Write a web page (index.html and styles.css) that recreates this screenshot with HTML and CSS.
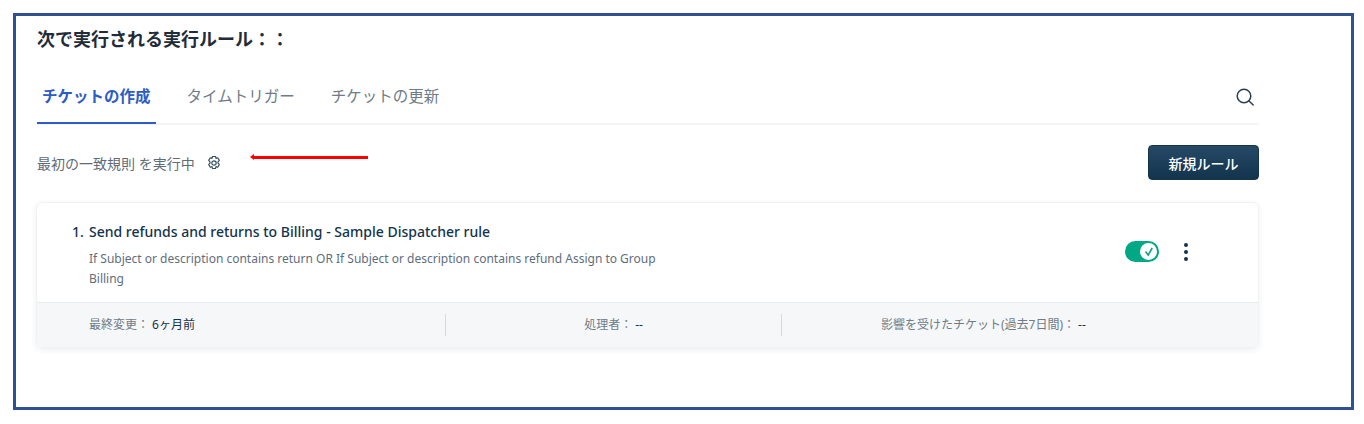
FILE: index.html
```html
<!DOCTYPE html>
<html lang="ja">
  <head>
    <meta charset="utf-8"/>
    <title>実行ルール</title>
    <link rel="stylesheet" href="styles.css">
  </head>
  <body>
    <div class="frame">
      <h1 class="title">次で実行される実行ルール：：</h1>
      <div class="tabs">
        <div class="tab-list">
          <a class="tab active">チケットの作成</a>
          <a class="tab">タイムトリガー</a>
          <a class="tab">チケットの更新</a>
        </div>
        <svg class="search" width="20" height="20" viewBox="0 0 20 20" fill="none" stroke="#2b3f54" stroke-width="1.5" stroke-linecap="round">
          <circle cx="9" cy="9" r="6.8"/>
          <path d="M14 14l4.2 4"/>
        </svg>
      </div>
      <div class="toolbar">
        <div class="mode">
          <span>最初の一致規則 を実行中</span>
          <svg class="gear" width="16" height="16" viewBox="0 0 16 16" fill="none" stroke="#3a4f63" stroke-width="1.2" stroke-linejoin="round">
            <path d="M6.5 1.5h3l.5 1.9 1.7-.6 1.6 2.6-1.3 1.5 0 1.2 1.3 1.5-1.6 2.6-1.7-.6-.5 1.9h-3l-.5-1.9-1.7.6-1.6-2.6 1.3-1.5 0-1.2-1.3-1.5 1.6-2.6 1.7.6z"/>
            <circle cx="8" cy="8" r="2.2"/>
          </svg>
        </div>
        <button class="new-rule">新規ルール</button>
      </div>
      <div class="card">
        <div class="card-body">
          <span class="num">1.</span>
          <div class="rule">
            <div class="rule-name">Send refunds and returns to Billing - Sample Dispatcher rule</div>
            <p class="rule-desc">If Subject or description contains return OR If Subject or description contains refund Assign to Group Billing</p>
          </div>
          <div class="toggle">
            <span class="knob">
              <svg width="12" height="12" viewBox="0 0 12 12" fill="none" stroke="#12a386" stroke-width="1.6">
                <path d="M2.5 5.5l2.7 3.5 4-7"/>
              </svg>
            </span>
          </div>
          <div class="more"><i></i><i></i><i></i></div>
        </div>
        <div class="card-foot">
          <div class="cell first"><span class="label">最終変更：</span><span class="value">6ヶ月前</span></div>
          <div class="cell second"><span class="label">処理者：</span><span class="value">--</span></div>
          <div class="cell third"><span class="label">影響を受けたチケット(過去7日間)：</span><span class="value">--</span></div>
        </div>
      </div>
      <div class="arrow"></div>
    </div>
  </body>
</html>
```

FILE: styles.css
```css
* {
  box-sizing: border-box;
}
body {
  margin: 0;
  background: #fff;
  font-family: "Noto Sans", "Noto Sans CJK JP", sans-serif;
  color: #12344d;
}
.frame {
  position: relative;
  width: 1341px;
  height: 397px;
  margin: 13px 0 0 13px;
  border: 3px solid #2f5190;
  padding: 0 92px 0 21px;
}
.title {
  margin: 0;
  padding-top: 10px;
  height: 46px;
  font-size: 18px;
  line-height: 26px;
  font-weight: 700;
  color: #1f2d3a;
}
.tabs {
  display: flex;
  justify-content: space-between;
  align-items: center;
  height: 63px;
  border-bottom: 2px solid #f3f4f8;
}
.tab-list {
  display: flex;
  gap: 20px;
  height: 63px;
}
.tab {
  padding: 23px 5px 0 5px;
  margin-right: 6px;
  font-size: 15.5px;
  line-height: 24px;
  color: #6f7c87;
}
.tab.active {
  margin-bottom: -2px;
  height: 63px;
  border-bottom: 2px solid #2c5cc5;
  color: #2c5cc5;
  font-weight: 700;
}
.search {
  margin: 8px 4px 0 0;
}
.toolbar {
  display: flex;
  justify-content: space-between;
  align-items: center;
  height: 77px;
  padding-bottom: 2px;
}
.mode {
  display: flex;
  align-items: center;
  gap: 11px;
  font-size: 14px;
  color: #5f6b76;
}
.new-rule {
  width: 111px;
  height: 35px;
  border: 1px solid #12344d;
  border-radius: 4px;
  background: linear-gradient(#264966, #12344d);
  color: #fff;
  font-family: inherit;
  font-size: 14px;
  font-weight: 500;
}
.card {
  width: 1223px;
  margin-left: -1px;
  height: 146px;
  border: 1px solid #f0f2f4;
  border-radius: 6px;
  box-shadow: 0 2px 6px rgba(18, 52, 77, 0.08);
  overflow: hidden;
}
.card-body {
  display: flex;
  align-items: flex-start;
  height: 100px;
  padding: 18px 0 0 35px;
  border-bottom: 1px solid #e9ecef;
}
.num {
  width: 17px;
  font-size: 14px;
  line-height: 21px;
  font-weight: 500;
  color: #12344d;
}
.rule {
  width: 580px;
}
.rule-name {
  font-size: 14px;
  line-height: 21px;
  font-weight: 500;
  color: #12344d;
}
.rule-desc {
  margin: 7px 0 0;
  font-size: 12px;
  line-height: 20px;
  color: #5f6e7c;
}
.toggle {
  display: flex;
  justify-content: flex-end;
  align-items: center;
  width: 34px;
  height: 21px;
  margin: 20px 0 0 456px;
  padding-right: 2px;
  border-radius: 11px;
  background: #00a886;
}
.knob {
  display: flex;
  justify-content: center;
  align-items: center;
  width: 17px;
  height: 17px;
  border-radius: 50%;
  background: #fff;
}
.more {
  display: flex;
  flex-direction: column;
  gap: 3px;
  margin: 22px 0 0 25px;
}
.more i {
  display: block;
  width: 4px;
  height: 4px;
  border-radius: 50%;
  background: #12344d;
}
.card-foot {
  display: flex;
  align-items: center;
  height: 44px;
  background: #f5f7f9;
  font-size: 12px;
}
.cell {
  height: 22px;
  line-height: 22px;
}
.label {
  color: #6f7c87;
}
.value {
  margin-left: 3px;
  color: #12344d;
}
.first {
  width: 409px;
  padding-left: 52px;
  border-right: 1px solid #d5dade;
}
.second {
  width: 336px;
  text-align: center;
  border-right: 1px solid #d5dade;
}
.third {
  padding-left: 99px;
}
.arrow {
  position: absolute;
  left: 237px;
  top: 140px;
  width: 115px;
  height: 3px;
  background: #ff0000;
}
.arrow::before {
  content: "";
  position: absolute;
  left: -3px;
  top: -2px;
  border-top: 3.5px solid transparent;
  border-bottom: 3.5px solid transparent;
  border-right: 4px solid #ff0000;
}
```
